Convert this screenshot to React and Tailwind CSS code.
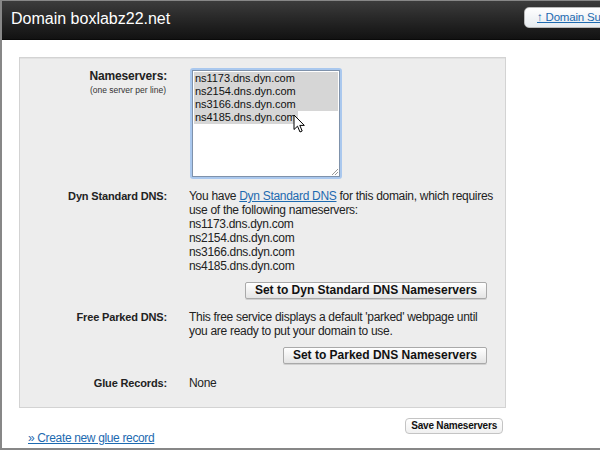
import React from "react";

const sans = "font-['Liberation_Sans',Arial,sans-serif]";

function Label({ children, className = "" }) {
  return (
    <div className={"text-right text-[11px] font-bold leading-[14px] tracking-[-0.15px] text-[#222] " + className}>
      {children}
    </div>
  );
}

function Btn({ children }) {
  return (
    <div className="flex justify-end pr-[18px]">
      <div className="h-[17px] rounded-[2px] border border-[#a9a9a9] bg-gradient-to-b from-white to-[#e4e4e4] px-[9px] text-[12px] font-bold leading-[15px] tracking-normal text-[#111] shadow-[0_1px_0_#d0d0d0]">
        {children}
      </div>
    </div>
  );
}

export default function App() {
  const ns = ["ns1173.dns.dyn.com", "ns2154.dns.dyn.com", "ns3166.dns.dyn.com", "ns4185.dns.dyn.com"];
  return (
    <div className={"w-[600px] h-[450px] overflow-hidden bg-white border-l-2 border-t border-b-2 border-[#878787] " + sans}>
      {/* header */}
      <div className="flex h-[39px] overflow-hidden bg-gradient-to-b from-[#3c3c3c] to-[#121212] border-b border-[#0a0a0a]">
        <div className="w-[522px] shrink-0 pl-[9px] pt-[8px] text-[16px] leading-[20px] text-white">
          Domain boxlabz22.net
        </div>
        <div className="mt-[6px] h-[21px] w-[140px] shrink-0 rounded-[5px] border border-[#b9b9b9] bg-gradient-to-b from-white to-[#e6ebef] pl-[12px] text-[11.5px] leading-[19px] tracking-[-0.2px] text-[#1d6ab0] whitespace-nowrap">
          <span className="underline">↑ Domain Summary</span>
        </div>
      </div>

      {/* body */}
      <div className="pl-[17px] pt-[17px]">
        <div className="w-[487px] border border-[#d3d3d3] bg-[#ededed] pt-[10px] pb-[17px] shadow-[inset_0_1px_0_#e2e2e2]">
          {/* Nameservers row */}
          <div className="grid grid-cols-[147px_1fr] gap-x-[22px]">
            <div className="pt-[1px]">
              <Label className="text-[12px] tracking-[-0.4px]">Nameservers:</Label>
              <div className="mt-[2px] pr-[1px] text-right text-[8.5px] leading-[10px] text-[#333]">(one server per line)</div>
            </div>
            <div className="relative">
              <div className="ml-[1px] h-[111px] w-[152px] rounded-[3px] bg-[#aac8ee] p-[2px]">
                <div className="relative h-full w-full border border-[#7f92ab] bg-white pl-[1px] pr-[1px] pt-[1px]">
                  {ns.map((n, i) => (
                    <div key={n} className="text-[11px] leading-[13px] tracking-[-0.05px] text-[#111]">
                      <span className={i < 3 ? "block bg-[#d6d6d6] pl-[1px]" : "inline-block bg-[#d6d6d6] pl-[1px] pr-[2px]"}>{n}</span>
                    </div>
                  ))}
                  {/* resize grip */}
                  <svg className="absolute bottom-[1px] right-[1px]" width="7" height="7" viewBox="0 0 7 7">
                    <line x1="1" y1="7" x2="7" y2="1" stroke="#9a9a9a" strokeWidth="1" />
                    <line x1="4" y1="7" x2="7" y2="4" stroke="#9a9a9a" strokeWidth="1" />
                  </svg>
                </div>
              </div>
              {/* mouse pointer */}
              <svg className="absolute left-[104px] top-[46px]" width="13" height="20" viewBox="0 0 13 20">
                <path d="M1 1 L1 15.5 L4.5 12.2 L7 18 L9.2 17 L6.8 11.4 L11.3 11.4 Z" fill="#fff" stroke="#000" strokeWidth="1" strokeLinejoin="round" />
              </svg>
            </div>
          </div>

          {/* Dyn Standard DNS row */}
          <div className="mt-[10px] grid grid-cols-[147px_1fr] gap-x-[22px]">
            <Label>Dyn Standard DNS:</Label>
            <div className="text-[12px] leading-[14px] tracking-[-0.3px] text-[#222]">
              <div className="whitespace-nowrap">
                You have <span className="text-[#1d6ab0] underline">Dyn Standard DNS</span> for this domain, which requires
              </div>
              <div className="whitespace-nowrap">use of the following nameservers:</div>
              {ns.map((n) => (
                <div key={n}>{n}</div>
              ))}
              <div className="mt-[9px]">
                <Btn>Set to Dyn Standard DNS Nameservers</Btn>
              </div>
            </div>
          </div>

          {/* Free Parked DNS row */}
          <div className="mt-[11px] grid grid-cols-[147px_1fr] gap-x-[22px]">
            <Label>Free Parked DNS:</Label>
            <div className="text-[12px] leading-[14px] tracking-[-0.3px] text-[#222]">
              <div className="whitespace-nowrap">This free service displays a default 'parked' webpage until</div>
              <div className="whitespace-nowrap">you are ready to put your domain to use.</div>
              <div className="mt-[9px]">
                <Btn>Set to Parked DNS Nameservers</Btn>
              </div>
            </div>
          </div>

          {/* Glue Records row */}
          <div className="mt-[12px] grid grid-cols-[147px_1fr] gap-x-[22px]">
            <Label>Glue Records:</Label>
            <div className="text-[12px] leading-[14px] tracking-[-0.3px] text-[#222]">None</div>
          </div>
        </div>

        {/* footer */}
        <div className="flex w-[487px] items-start justify-between">
          <div className="ml-[9px] mt-[23px] text-[12px] leading-[14px] tracking-[-0.35px] text-[#1d6ab0] underline">
            » Create new glue record
          </div>
          <div className="mr-[3px] mt-[10px] h-[16px] rounded-[4px] border border-[#c4c4c4] bg-gradient-to-b from-white to-[#f0f0f0] px-[5px] text-[10px] font-bold leading-[14px] tracking-[-0.2px] text-[#111]">
            Save Nameservers
          </div>
        </div>
      </div>
    </div>
  );
}
